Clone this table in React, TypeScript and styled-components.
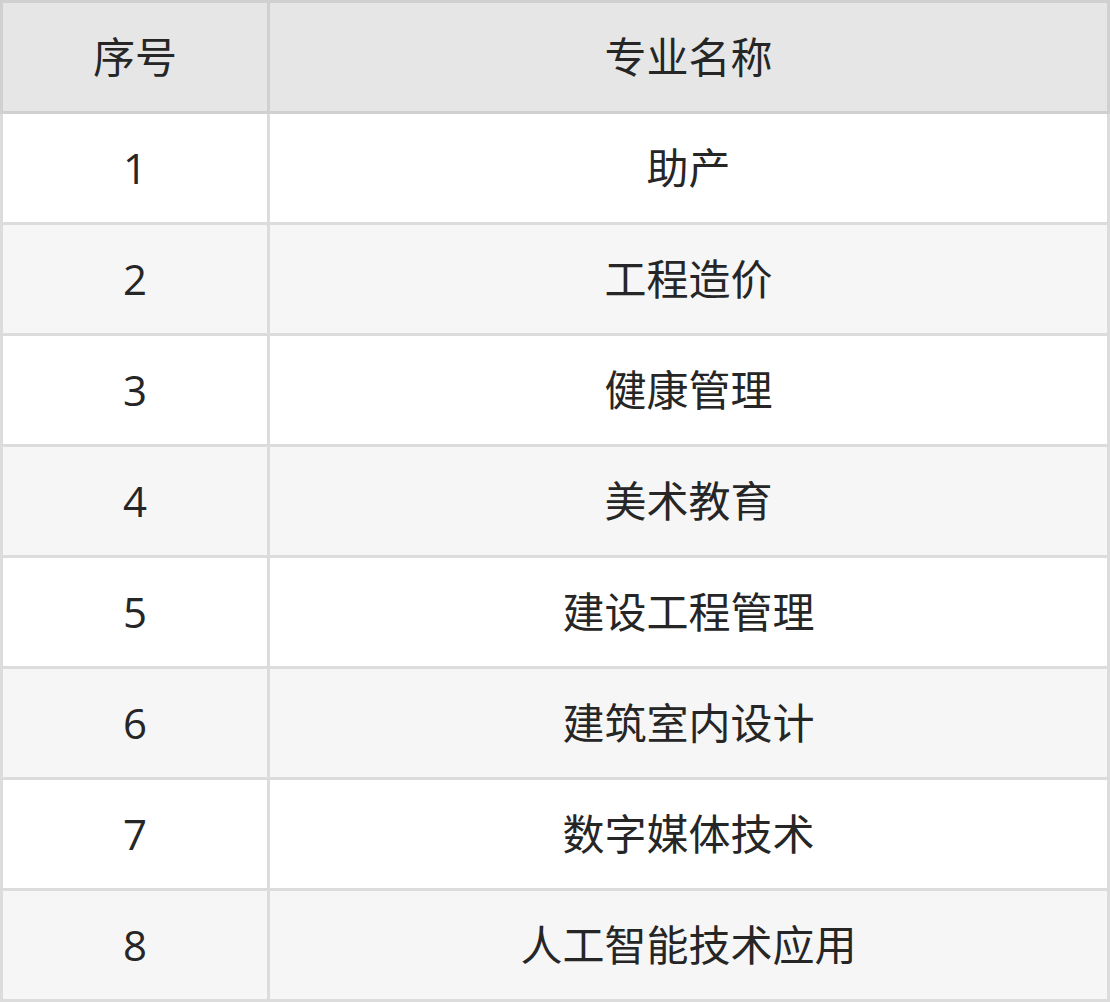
import { createGlobalStyle } from 'styled-components';
import styled from 'styled-components';

const majors = [
  '助产',
  '工程造价',
  '健康管理',
  '美术教育',
  '建设工程管理',
  '建筑室内设计',
  '数字媒体技术',
  '人工智能技术应用',
];

const GlobalStyle = createGlobalStyle`
  html, body {
    margin: 0;
    padding: 0;
    background: #ffffff;
  }
  body {
    font-family: "Open Sans", "Noto Sans CJK SC", sans-serif;
    color: #262626;
  }
`;

const Table = styled.div`
  width: 1110px;
  display: flex;
  flex-direction: column;
`;

const Row = styled.div<{ $striped?: boolean; $head?: boolean }>`
  display: grid;
  grid-template-columns: 270px 840px;
  background: ${p => (p.$head ? '#e6e6e6' : p.$striped ? '#f6f6f6' : '#ffffff')};
`;

const Cell = styled.div<{ $head?: boolean; $first?: boolean }>`
  box-sizing: border-box;
  height: ${p => (p.$head ? 114 : 111)}px;
  display: flex;
  align-items: center;
  justify-content: center;
  font-size: 42px;
  line-height: 1;
  border-right: 3px solid ${p => (p.$head ? '#d0d0d0' : '#dcdcdc')};
  border-bottom: 3px solid ${p => (p.$head ? '#d0d0d0' : '#dcdcdc')};
  border-left: ${p => (p.$first ? `3px solid ${p.$head ? '#d0d0d0' : '#dcdcdc'}` : 'none')};
  border-top: ${p => (p.$head ? '3px solid #d0d0d0' : 'none')};
`;

export default function App() {
  return (
    <>
      <GlobalStyle />
      <Table>
        <Row $head>
          <Cell $head $first>序号</Cell>
          <Cell $head>专业名称</Cell>
        </Row>
        {majors.map((name, i) => (
          <Row key={name} $striped={i % 2 === 1}>
            <Cell $first>{i + 1}</Cell>
            <Cell>{name}</Cell>
          </Row>
        ))}
      </Table>
    </>
  );
}
